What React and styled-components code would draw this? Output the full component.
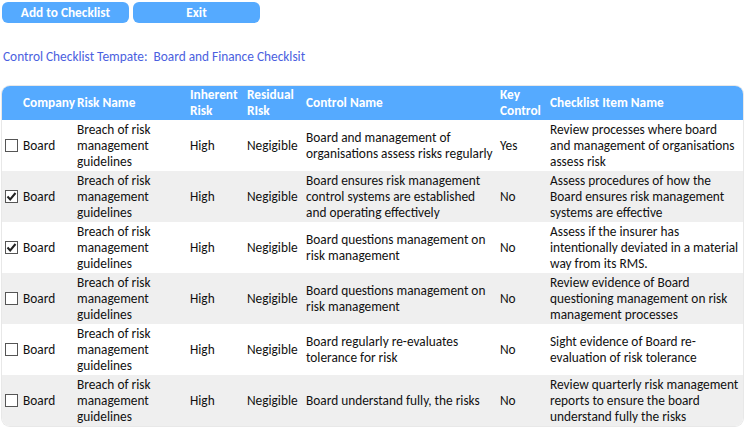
import React from "react";
import styled, { createGlobalStyle } from "styled-components";

const GlobalStyle = createGlobalStyle`
  body {
    margin: 0;
    padding: 2px;
    background: #fff;
    font-family: Carlito, Calibri, Lato, "Liberation Sans", sans-serif;
    font-size: 13.33px;
    color: #111;
  }
`;

const Toolbar = styled.div`
  display: flex;
  gap: 4px;
`;

const Button = styled.button`
  width: 127px;
  height: 21px;
  border: none;
  border-radius: 6px;
  background: #55aaff;
  color: #fff;
  font-family: inherit;
  font-size: 13.33px;
  font-weight: bold;
  padding: 0;
  cursor: pointer;
`;

const Title = styled.div`
  margin: 26px 0 0 1px;
  color: #4b5fe0;
  font-size: 13.33px;
  line-height: 16px;
`;

const TableWrap = styled.div`
  margin-top: 21px;
  width: 741px;
  border-radius: 8px;
  overflow: hidden;
  box-shadow: 0 0 0 1px #e8e8e8;
`;

const Table = styled.table`
  width: 100%;
  border-collapse: collapse;
  table-layout: fixed;
  line-height: 16px;

  th,
  td {
    box-sizing: border-box;
  }
`;

const HeadCell = styled.th`
  height: 34px;
  padding: 0 2px 0 ${(p) => p.$pl || 2}px;
  background: #55aaff;
  color: #fff;
  font-weight: bold;
  text-align: left;
  vertical-align: middle;
`;

const Row = styled.tr`
  height: 51px;
  background: ${(p) => (p.$alt ? "#efefef" : "#fff")};
`;

const Cell = styled.td`
  padding: 0 ${(p) => p.$pr || 2}px 0 2px;
  vertical-align: middle;
`;

const CompanyCell = styled.div`
  display: flex;
  align-items: center;
  gap: 5px;
  padding-left: 1px;
`;

const Box = styled.span`
  display: inline-flex;
  align-items: center;
  justify-content: center;
  width: 13px;
  height: 13px;
  box-sizing: border-box;
  border: 1px solid #555;
  background: #fff;
`;

const Check = ({ on }) => (
  <Box>
    {on && (
      <svg width="11" height="11" viewBox="0 0 11 11">
        <path d="M1.5 5.5 L4.2 8.5 L9.5 2" fill="none" stroke="#222" strokeWidth="2" />
      </svg>
    )}
  </Box>
);

const widths = [73, 113, 57, 59, 194, 50, 195];

const rows = [
  {
    on: false,
    control: "Board and management of organisations assess risks regularly",
    key: "Yes",
    item: "Review processes where board and management of organisations assess risk",
  },
  {
    on: true,
    control: "Board ensures risk management control systems are established and operating effectively",
    key: "No",
    item: "Assess procedures of how the Board ensures risk management systems are effective",
  },
  {
    on: true,
    control: "Board questions management on risk management",
    key: "No",
    item: "Assess if the insurer has intentionally deviated in a material way from its RMS.",
  },
  {
    on: false,
    control: "Board questions management on risk management",
    key: "No",
    item: "Review evidence of Board questioning management on risk management processes",
  },
  {
    on: false,
    control: "Board regularly re-evaluates tolerance for risk",
    key: "No",
    item: "Sight evidence of Board re-evaluation of risk tolerance",
  },
  {
    on: false,
    control: "Board understand fully, the risks",
    key: "No",
    item: "Review quarterly risk management reports to ensure the board understand fully the risks",
  },
];

export default function App() {
  return (
    <>
      <GlobalStyle />
      <Toolbar>
        <Button>Add to Checklist</Button>
        <Button>Exit</Button>
      </Toolbar>
      <Title>Control Checklist Tempate:&nbsp; Board and Finance Checklsit</Title>
      <TableWrap>
        <Table>
          <colgroup>
            {widths.map((w, i) => (
              <col key={i} style={{ width: w }} />
            ))}
          </colgroup>
          <thead>
            <tr>
              <HeadCell $pl={21}>Company</HeadCell>
              <HeadCell>Risk Name</HeadCell>
              <HeadCell>Inherent Risk</HeadCell>
              <HeadCell>Residual RIsk</HeadCell>
              <HeadCell>Control Name</HeadCell>
              <HeadCell>Key Control</HeadCell>
              <HeadCell>Checklist Item Name</HeadCell>
            </tr>
          </thead>
          <tbody>
            {rows.map((r, i) => (
              <Row key={i} $alt={i % 2 === 1}>
                <Cell>
                  <CompanyCell>
                    <Check on={r.on} />
                    Board
                  </CompanyCell>
                </Cell>
                <Cell>Breach of risk management guidelines</Cell>
                <Cell>High</Cell>
                <Cell>Negigible</Cell>
                <Cell $pr={3}>{r.control}</Cell>
                <Cell>{r.key}</Cell>
                <Cell $pr={4}>{r.item}</Cell>
              </Row>
            ))}
          </tbody>
        </Table>
      </TableWrap>
    </>
  );
}
